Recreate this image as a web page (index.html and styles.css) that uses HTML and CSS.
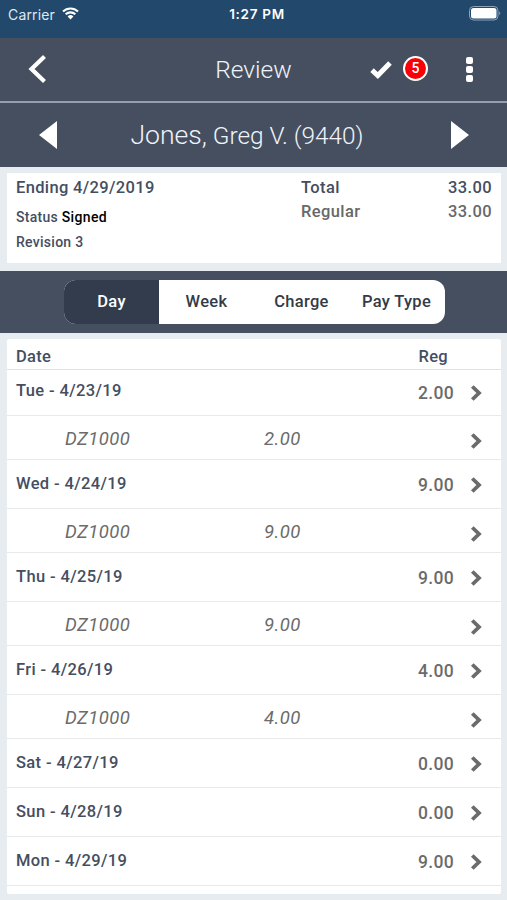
FILE: index.html
```html
<!DOCTYPE html>
<html lang="en">
<head>
<meta charset="utf-8">
<meta name="viewport" content="width=device-width, initial-scale=1">
<title>Review</title>
<link rel="stylesheet" href="styles.css">
</head>
<body>
<svg class="defs" aria-hidden="true"><symbol id="chev" viewBox="0 0 12 18"><path d="M2.3 2.500 9 9l-6.700 6.500" fill="none" stroke="currentColor" stroke-width="3.800"/></symbol></svg>
<div class="status">
  <span class="carrier">Carrier</span>
  <svg class="wifi" width="17" height="13" viewBox="0 0 17 13" fill="none" stroke="#fff"><path d="M1 4.5a10.7 10.7 0 0 1 15 0M3.7 7.3a6.9 6.9 0 0 1 9.6 0" stroke-width="2.1"/><path d="M5.6 9.5a4.2 4.2 0 0 1 5.8 0L8.500 12.400z" fill="#fff" stroke="none"/></svg>
  <span class="clock">1:27 PM</span>
  <svg class="battery" width="32" height="15" viewBox="0 0 32 15"><rect x=".5" y=".5" width="28.500" height="13.500" rx="4" fill="none" stroke="#8ba2b8"/><rect x="2" y="2" width="25.500" height="10.500" rx="2.500" fill="#fff"/><path d="M30.200 5.200q2 2 0 4z" fill="#8ba2b8"/></svg>
</div>
<header class="nav">
  <svg class="back" width="20" height="30" viewBox="0 0 20 30"><path d="M17.500 2.500 4.500 15l13 12.500" fill="none" stroke="#fff" stroke-width="4.200"/></svg>
  <h1>Review</h1>
  <svg class="check" width="22" height="19" viewBox="0 0 22 19"><path d="M2 10.200 7.800 15.500 20 3" fill="none" stroke="#fff" stroke-width="5"/></svg>
  <span class="badge">5</span>
  <span class="more"><i></i><i></i><i></i></span>
</header>
<div class="person">
  <svg width="18" height="28" viewBox="0 0 18 28"><path d="M18 0v28L0 14z" fill="#fff"/></svg>
  <h2><span class="surname">Jones,</span> <span class="given">Greg V. (9440)</span></h2>
  <svg width="18" height="28" viewBox="0 0 18 28"><path d="M0 0v28l18-14z" fill="#fff"/></svg>
</div>
<section class="summary">
  <div class="period">
    <div class="ending">Ending 4/29/2019</div>
    <div class="small">Status <b>Signed</b></div>
    <div class="small">Revision 3</div>
  </div>
  <div class="totals">
    <div class="total"><span>Total</span><span>33.00</span></div>
    <div class="total regular"><span>Regular</span><span>33.00</span></div>
  </div>
</section>
<nav class="tabs"><div class="segment">
  <span class="on">Day</span><span>Week</span><span>Charge</span><span>Pay Type</span>
</div></nav>
<main class="list">
  <div class="head"><span>Date</span><span>Reg</span></div>
  <div class="day first"><span>Tue - 4/23/19</span><em>2.00</em><svg><use href="#chev"/></svg></div>
  <div class="sub"><span>DZ1000</span><em>2.00</em><svg><use href="#chev"/></svg></div>
  <div class="day"><span>Wed - 4/24/19</span><em>9.00</em><svg><use href="#chev"/></svg></div>
  <div class="sub"><span>DZ1000</span><em>9.00</em><svg><use href="#chev"/></svg></div>
  <div class="day"><span>Thu - 4/25/19</span><em>9.00</em><svg><use href="#chev"/></svg></div>
  <div class="sub"><span>DZ1000</span><em>9.00</em><svg><use href="#chev"/></svg></div>
  <div class="day"><span>Fri - 4/26/19</span><em>4.00</em><svg><use href="#chev"/></svg></div>
  <div class="sub"><span>DZ1000</span><em>4.00</em><svg><use href="#chev"/></svg></div>
  <div class="day"><span>Sat - 4/27/19</span><em>0.00</em><svg><use href="#chev"/></svg></div>
  <div class="day"><span>Sun - 4/28/19</span><em>0.00</em><svg><use href="#chev"/></svg></div>
  <div class="day"><span>Mon - 4/29/19</span><em>9.00</em><svg><use href="#chev"/></svg></div>
</main>
</body>
</html>
```
FILE: styles.css
```css
* { box-sizing: border-box; }
body { margin: 0; height: 900px; overflow: hidden; background: #e7ecf0; font-family: Roboto, "Liberation Sans", sans-serif; color: #454e5f; }
.defs { display: none; }
svg { display: block; flex: none; }
h1, h2 { margin: 0; font-weight: 300; color: #f0f3fa; white-space: nowrap; }

.status { height: 38px; padding: 6px 5px 0 8px; display: grid; grid-template-columns: 54px 137px 116px 1fr 33px; background: #22486c; color: #fff; font: 14px/17px Inter, sans-serif; }
.carrier { color: #dfe9f2; letter-spacing: .15px; }
.wifi { margin-top: 1px; }
.clock { font-weight: 600; font-size: 13.500px; letter-spacing: .7px; text-align: center; grid-column: 3; }
.battery { grid-column: 5; }

.nav { height: 65px; border-bottom: 2px solid #94a0ad; background: #454f5f; display: grid; grid-template-columns: 187px 133px 83px 62px 7px; align-items: center; }
.back { margin-left: 27px; margin-top: -2px; }
.nav h1 { font-size: 24.500px; line-height: 30px; text-align: center; }
.check { margin-left: 50px; margin-top: -1px; }
.badge { width: 25px; height: 25px; margin-top: -2px; border: 2px solid #fff; border-radius: 50%; background: #f90006; color: #fff; font-weight: 500; font-size: 14px; line-height: 21px; text-align: center; }
.more { display: grid; gap: 2px; margin-left: 1px; margin-top: -1px; }
.more i { width: 7px; height: 7px; border-radius: 2px; background: #fff; }

.person { height: 64px; padding: 0 38px 0 39px; display: flex; align-items: center; justify-content: space-between; background: #454f5f; }
.person h2 { margin-right: 14px; padding-bottom: 2px; }
.surname { font-size: 26.600px; }
.given { font-size: 24.400px; }

.summary { margin: 6px 6px 8px 7px; height: 90px; padding: 5px 9px 0 9px; background: #fff; display: flex; font-weight: 500; }
.period { width: 285px; }
.ending { font-size: 16.500px; line-height: 20px; letter-spacing: .35px; margin-bottom: 7px; }
.small { font-size: 14px; line-height: 24.500px; letter-spacing: .27px; }
.small b { color: #000; font-weight: 500; letter-spacing: .35px; }
.totals { flex: 1; }
.total { display: flex; justify-content: space-between; font-size: 16.500px; line-height: 20px; letter-spacing: .4px; margin-bottom: 4px; }
.regular { color: #686868; }

.tabs { height: 62px; padding: 9px 62px 0 64px; background: #454f5f; }
.segment { height: 44px; border-radius: 12px; background: #fff; overflow: hidden; display: grid; grid-template-columns: repeat(4, 95px); font-weight: 500; font-size: 16.500px; line-height: 44px; letter-spacing: .3px; text-align: center; color: #333b49; }
.on { background: #333c4c; color: #fff; }

.list { margin: 6px 6px 0 7px; height: 555px; background: #fff; border-radius: 2px; }
.head { height: 31px; border-bottom: 1px solid #dfe3e6; padding: 8px 53px 0 9px; display: flex; justify-content: space-between; font-weight: 500; font-size: 16.500px; line-height: 20px; letter-spacing: .3px; }
.day, .sub { border-bottom: 1px solid #e7e9eb; display: grid; padding-left: 9px; align-items: start; }
.day { height: 49px; grid-template-columns: 402px 52px 12px; padding-top: 14px; font-weight: 500; font-size: 16.500px; line-height: 20px; letter-spacing: .37px; }
.first { height: 46px; padding-top: 11px; }
.day em { font-style: normal; padding-top: 1px; font-size: 17.500px; color: #6b6b6b; }
.day svg { margin-top: 2px; }
.day.first em { padding-top: 2px; }
.day.first svg { margin-top: 3px; }
.list svg { width: 12px; height: 18px; color: #6b6b6b; }
.sub { height: 44px; grid-template-columns: 199px 199px 12px; padding-left: 58px; padding-top: 13px; color: #6b6b6b; font-size: 18.500px; line-height: 20px; letter-spacing: .45px; font-style: italic; }
.sub svg { margin-left: 7px; margin-top: 3px; }
```
